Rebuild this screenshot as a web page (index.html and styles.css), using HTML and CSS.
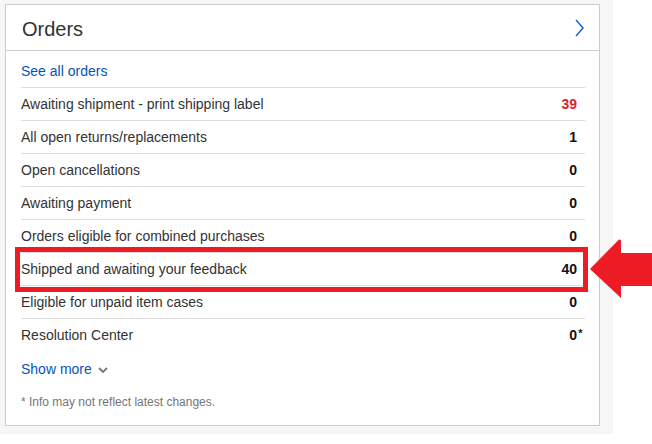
FILE: index.html
```html
<!DOCTYPE html>
<html lang="en">
<head>
<meta charset="utf-8">
<title>Orders</title>
<link rel="stylesheet" href="styles.css">
</head>
<body>
<div class="page">
  <section class="card">
    <header class="card-head">
      <h2 class="title">Orders</h2>
      <svg class="head-chevron" width="9" height="18" viewBox="0 0 9 18" aria-hidden="true">
        <path d="M1 1 L8 9 L1 17" fill="none" stroke="#1a5ad7" stroke-width="1.4"/>
      </svg>
    </header>
    <div class="card-body">
      <div class="see-all"><a class="link" href="#">See all orders</a></div>
      <ul class="rows">
        <li class="row"><span class="label">Awaiting shipment - print shipping label</span><span class="value red">39</span></li>
        <li class="row"><span class="label">All open returns/replacements</span><span class="value">1</span></li>
        <li class="row"><span class="label">Open cancellations</span><span class="value">0</span></li>
        <li class="row"><span class="label">Awaiting payment</span><span class="value">0</span></li>
        <li class="row"><span class="label">Orders eligible for combined purchases</span><span class="value">0</span></li>
        <li class="row"><span class="label">Shipped and awaiting your feedback</span><span class="value">40</span></li>
        <li class="row"><span class="label">Eligible for unpaid item cases</span><span class="value">0</span></li>
        <li class="row"><span class="label">Resolution Center</span><span class="value">0<span class="star">*</span></span></li>
      </ul>
      <div class="show-more">
        <a class="link" href="#">Show more</a>
        <svg class="more-chevron" width="10" height="6" viewBox="0 0 10 6" aria-hidden="true">
          <path d="M1 1 L5 5 L9 1" fill="none" stroke="#767676" stroke-width="1.8"/>
        </svg>
      </div>
      <p class="note">* Info may not reflect latest changes.</p>
    </div>
  </section>
  <div class="highlight"></div>
  <svg class="arrow" width="62" height="60" viewBox="0 0 62 60" aria-hidden="true">
    <path d="M0 30 L29 0.5 Q31 0 31 2 L31 14 L62 14 L62 47 L31 47 L31 59 Z" fill="#ed1c24"/>
  </svg>
</div>
</body>
</html>
```

FILE: styles.css
```css
html, body {
  margin: 0;
  padding: 0;
  background: #ffffff;
}

body {
  font-family: "Liberation Sans", Arial, sans-serif;
  color: #333333;
}

.page {
  position: relative;
  width: 613px;
  height: 434px;
  box-sizing: border-box;
  padding: 4px 0 0 5px;
  background: #f6f6f6;
}

.card {
  width: 595px;
  height: 422px;
  box-sizing: border-box;
  border: 1px solid #cccccc;
  background: #ffffff;
}

.card-head {
  height: 45px;
  border-bottom: 1px solid #cccccc;
  display: flex;
  align-items: center;
  justify-content: space-between;
  padding: 0 15px 0 16px;
}

.title {
  margin: 0;
  font-size: 20px;
  font-weight: normal;
  color: #333333;
  line-height: 24px;
  padding-top: 2px;
}

.head-chevron {
  display: block;
  margin-top: 1px;
}

.card-body {
  padding: 0 14px 0 15px;
}

.see-all {
  height: 32px;
  padding-top: 4px;
  line-height: 32px;
  font-size: 14px;
}

.link {
  color: #0654ba;
  text-decoration: none;
  font-size: 14px;
}

.rows {
  list-style: none;
  margin: 0;
  padding: 0;
}

.row {
  display: flex;
  justify-content: space-between;
  align-items: center;
  height: 32px;
  border-top: 1px solid #dddddd;
  font-size: 14px;
  line-height: 32px;
}

.label {
  color: #333333;
}

.value {
  position: relative;
  font-weight: bold;
  color: #111111;
  padding-right: 8px;
}

.value.red {
  color: #dd1e31;
}

.star {
  position: absolute;
  left: 9px;
  top: -2px;
  font-weight: bold;
  font-size: 11px;
}

.show-more {
  display: flex;
  align-items: center;
  gap: 6px;
  padding-top: 8px;
  height: 20px;
  line-height: 20px;
}

.more-chevron {
  display: block;
  margin-top: 1px;
}

.note {
  margin: 14px 0 0;
  font-size: 12px;
  line-height: 18px;
  color: #767676;
}

.highlight {
  position: absolute;
  left: 15px;
  top: 247px;
  width: 573px;
  height: 45px;
  box-sizing: border-box;
  border: 5px solid #ed1c24;
}

.arrow {
  position: absolute;
  left: 590px;
  top: 239px;
  display: block;
}
```
